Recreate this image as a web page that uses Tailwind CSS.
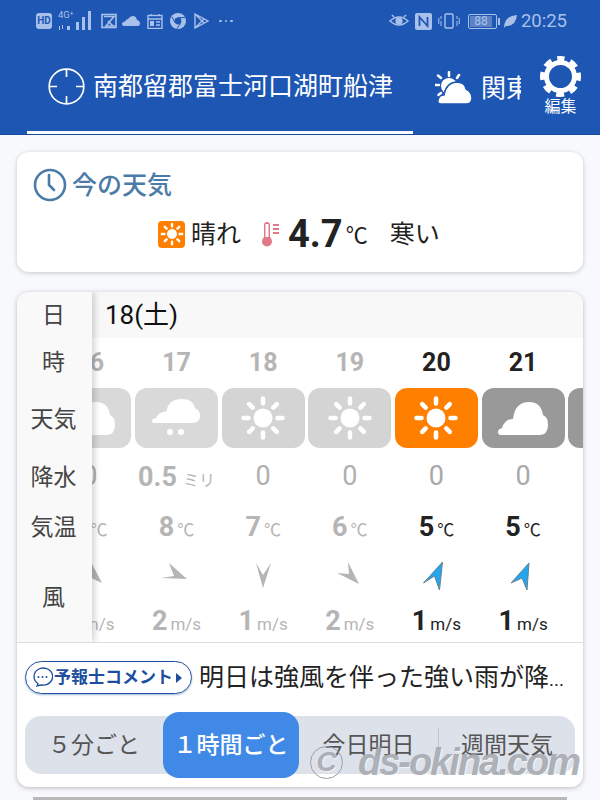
<!DOCTYPE html>
<html lang="ja">
<head>
<meta charset="utf-8">
<script src="https://cdn.jsdelivr.net/npm/@tailwindcss/browser@4"></script>
</head>
<body class="m-0">
<svg class="hidden">
  <symbol id="sun" viewBox="0 0 46 46">
    <circle cx="23" cy="23" r="9.5" fill="#fff"/>
    <g stroke="#fff" stroke-width="4.500" stroke-linecap="round">
      <path d="M23 3.5V8.5M23 37.5V42.5M3.5 23H8.5M37.500 23H42.5M9.2 9.2L12.7 12.7M33.300 33.300L36.800 36.800M36.800 9.2L33.300 12.700M12.700 33.300L9.2 36.800"/>
    </g>
  </symbol>
  <symbol id="cloud" viewBox="0 0 50 33">
    <path fill="#fff" d="M3 33Q0 33 0 30Q0 27 4 26Q7 17 15 17Q17 0 31 0Q43 0 45 13Q50 15 50 23Q50 33 41 33Z"/>
  </symbol>
</svg>
<div class="relative w-[600px] h-[800px] overflow-hidden bg-[#f8f9fc] font-['Roboto','Noto_Sans_CJK_JP',sans-serif]">

  <!-- Header -->
  <header class="h-[135px] bg-[#1e56b4] border-b border-[#184a9c]">
    <div class="h-[42px] flex items-center pl-[36px] pr-[33px] text-[#a9c1ea]">
      <div class="flex items-center h-[16px] w-[16px] justify-center rounded-[3px] bg-[#a9c1ea] text-[#1e56b4] text-[10px] font-bold leading-none">HD</div>
      <svg class="ml-[6px]" width="36" height="22" viewBox="0 0 36 22" fill="currentColor">
        <text x="0" y="8" font-size="9.500" font-family="Roboto">4G⁺</text>
        <path d="M1 16h1v4h-1zM4 15h1v4h-1zM9 16h3v4H9z"/>
        <rect x="18" y="12" width="3" height="8"/><rect x="24" y="7" width="3" height="13"/><rect x="30" y="1" width="3" height="19"/>
      </svg>
      <svg class="ml-[7px]" width="16" height="16" viewBox="0 0 16 16" fill="none" stroke="currentColor" stroke-width="1.600">
        <rect x="1" y="1.500" width="14" height="13"/><path d="M3 3.500H13L5 13H14M7 8L12 13"/>
      </svg>
      <svg class="ml-[5px]" width="18" height="10" viewBox="0 0 18 10" fill="currentColor"><path d="M2 10Q0 10 0 8Q0 6 3 5.500Q4 3 6 3Q8 0 11 0Q14 0 15 4Q18 5 18 7.500Q18 10 15 10Z"/></svg>
      <svg class="ml-[7px]" width="16" height="15" viewBox="0 0 16 15" fill="none" stroke="currentColor" stroke-width="1.400">
        <rect x="1" y="1.500" width="14" height="13"/><path d="M1 5H15M4 0V2M12 0V2M9 8H13M9 11H13"/><rect x="3" y="7" width="4" height="5" fill="currentColor" stroke="none"/>
      </svg>
      <svg class="ml-[7px]" width="16" height="16" viewBox="0 0 16 16"><circle cx="8" cy="8" r="8" fill="currentColor"/><circle cx="8" cy="8" r="3.400" fill="#1e56b4"/><path d="M8 4.600H15M5 9.500L2 4M10.500 10.500L7 15.500" stroke="#1e56b4" stroke-width="1"/></svg>
      <svg class="ml-[8px]" width="15" height="16" viewBox="0 0 15 16" fill="none" stroke="currentColor" stroke-width="1.400"><path d="M1 1L14 8L1 15ZM1 1L10 10M1 15L10 6"/></svg>
      <div class="ml-[10px] flex gap-[3px]"><span class="w-[2.500px] h-[2.500px] rounded-full bg-[#a9c1ea]"></span><span class="w-[2.500px] h-[2.500px] rounded-full bg-[#a9c1ea]"></span><span class="w-[2.500px] h-[2.500px] rounded-full bg-[#a9c1ea]"></span></div>

      <svg class="ml-auto" width="20" height="14" viewBox="0 0 20 14" fill="none" stroke="currentColor" stroke-width="1.600"><path d="M1 7Q10 -1 19 7Q10 15 1 7Z"/><circle cx="10" cy="7" r="2.800" fill="currentColor"/><path d="M3 1L5 3M17 1L15 3"/></svg>
      <svg class="ml-[6px]" width="17" height="17" viewBox="0 0 17 17"><rect width="17" height="17" rx="2" fill="currentColor"/><path d="M4.500 13V4L12.500 13V4" fill="none" stroke="#1e56b4" stroke-width="1.800"/></svg>
      <svg class="ml-[6px]" width="22" height="16" viewBox="0 0 22 16" fill="none" stroke="currentColor" stroke-width="1.400"><rect x="7" y="1" width="8" height="14" rx="1"/><path d="M3 3V6M3 8V13M0.800 5V11M19 3V6M19 8V13M21.200 5V11" stroke-width="1"/></svg>
      <div class="ml-[8px] w-[29px] h-[15px] border border-[#a9c1ea] rounded-[2px] p-px"><div class="h-full w-[85%] bg-[#5c83c6] text-center text-[12px] leading-[11px] text-[#a9c1ea]">88</div></div>
      <span class="ml-px w-[1.500px] h-[7px] bg-[#a9c1ea]"></span>
      <svg class="ml-[4px]" width="13" height="13" viewBox="0 0 13 13" fill="currentColor"><path d="M0 13Q0 1 13 0Q12 11 2 11Z"/></svg>
      <span class="ml-[4px] text-[18.500px] leading-none">20:25</span>
    </div>

    <div class="h-[92px] flex pl-[27px]">
      <div class="w-[386px] flex items-center pl-[21px] border-b-[3px] border-white">
        <svg width="37" height="37" viewBox="0 0 37 37" fill="none" stroke="#fff" stroke-width="1.700"><circle cx="18.500" cy="18.500" r="17.300"/><path d="M18.500 1V9M18.500 28V36M1 18.500H9M28 18.500H36"/></svg>
        <span class="ml-[8px] text-[25px] leading-none text-white whitespace-nowrap">南都留郡富士河口湖町船津</span>
      </div>
      <div class="w-[108px] flex items-center pl-[22px] overflow-hidden">
        <svg class="shrink-0" width="38" height="34" viewBox="0 0 38 34">
          <g stroke="#fff" stroke-width="2.500" stroke-linecap="round"><path d="M14 1V5M3 4.500L6 7M0.500 14H4M3.500 24L6 22M24 4L22 7"/></g>
          <circle cx="14" cy="15" r="8" fill="#fff"/>
          <path fill="#fff" stroke="#1e56b4" stroke-width="1.500" d="M6 33Q2 33 3 29Q4 24 9 24Q11 12 21 11Q30 11 31 18Q37 21 37 27Q37 33 31 33Z"/>
        </svg>
        <span class="ml-[8px] text-[25px] leading-none text-white whitespace-nowrap">関東</span>
      </div>
      <div class="ml-[19px] w-[41px] flex flex-col items-center pt-[14px]">
        <svg class="shrink-0" width="41" height="41" viewBox="0 0 41 41" fill="none" stroke="#fff">
          <circle cx="20.500" cy="20.500" r="14" stroke-width="5"/>
          <circle cx="20.500" cy="20.500" r="18" stroke-width="5" stroke-dasharray="8 6.137" stroke-dashoffset="4" transform="rotate(-90 20.500 20.500)"/>
        </svg>
        <span class="mt-[2px] text-[16px] leading-none text-white whitespace-nowrap">編集</span>
      </div>
    </div>
  </header>

  <!-- Current weather -->
  <section class="mx-[17px] mt-[17px] h-[120px] bg-white rounded-xl shadow-[0_1px_5px_rgba(0,0,0,0.2)]">
    <div class="flex items-center pl-[16px] pt-[16px]">
      <svg width="34" height="34" viewBox="0 0 34 34" fill="none" stroke="#4a7ba7" stroke-width="2.600" stroke-linecap="round"><circle cx="17" cy="17" r="15"/><path d="M16 7V17L21 22"/></svg>
      <span class="ml-[5px] text-[25px] leading-none font-medium text-[#4d7ba8] whitespace-nowrap">今の天気</span>
    </div>
    <div class="mt-[10px] h-[44px] flex items-center pl-[141px] text-[#222]">
      <div class="w-[27px] h-[27px] bg-[#ff8000] rounded-[4px] flex items-center justify-center">
        <svg width="24" height="24"><use href="#sun"/></svg>
      </div>
      <span class="ml-[6px] text-[25px] leading-none whitespace-nowrap">晴れ</span>
      <svg class="ml-[21px]" width="18" height="26" viewBox="0 0 18 26" fill="none"><path d="M2 16V4Q2 1 5 1Q8 1 8 4V16Q10 18 10 20.500A5 5 0 0 1 0 20.500Q0 18 2 16Z" fill="#e17a88"/><rect x="3.500" y="3" width="3" height="13" fill="#fff"/><path d="M11 4H17M11 8H17M11 12H17" stroke="#e17a88" stroke-width="1.800"/></svg>
      <span class="ml-[8px] text-[38px] leading-none font-bold">4.7</span>
      <span class="ml-[3px] text-[22px] leading-none mt-[4px]">℃</span>
      <span class="ml-[22px] text-[25px] leading-none whitespace-nowrap">寒い</span>
    </div>
  </section>

  <!-- Forecast -->
  <section class="relative mx-[17px] mt-[20px] h-[495px] bg-white rounded-xl shadow-[0_1px_5px_rgba(0,0,0,0.25)] overflow-hidden">
    <div class="h-[46px] bg-[#f8f8f8] flex items-center pl-[88px] text-[26px] text-[#111] leading-none">18(土)</div>

    <div class="flex pl-[29.500px] w-[700px] overflow-hidden h-[304px]">
      <!-- 16 -->
      <div class="w-[86.670px] shrink-0 flex flex-col items-center text-[#b5b5b5]">
        <div class="h-[50px] pt-[10px] text-[25px] leading-[30px] font-bold">16</div>
        <div class="w-[83px] h-[60px] rounded-[12px] bg-[#d9d9d9] flex items-center justify-center"><svg width="50" height="33"><use href="#cloud"/></svg></div>
        <div class="h-[56px] pt-px flex items-center text-[27px] text-[#b0b0b0]">0</div>
        <div class="h-[44px] flex items-baseline pt-[3px]"><b class="text-[27px]">8</b><span class="ml-[3px] text-[17px]">℃</span></div>
        <svg class="h-[30px] mt-[13px]" width="30" height="30" viewBox="0 0 30 30"><polygon points="27,22 5,12 17,13 16,1" fill="#b5b5b5"/></svg>
        <div class="h-[44px] flex items-baseline pt-[10px]"><b class="text-[27px]">2</b><span class="ml-[3px] text-[17px]">m/s</span></div>
      </div>
      <!-- 17 -->
      <div class="w-[86.670px] shrink-0 flex flex-col items-center text-[#b5b5b5]">
        <div class="h-[50px] pt-[10px] text-[25px] leading-[30px] font-bold">17</div>
        <div class="w-[83px] h-[60px] rounded-[12px] bg-[#d9d9d9] flex items-center justify-center">
          <svg width="50" height="46" viewBox="0 0 50 46"><g transform="translate(1 4) scale(0.96 0.73)"><use href="#cloud" width="50" height="33"/></g><circle cx="19" cy="37" r="3" fill="#fff"/><circle cx="30" cy="37" r="3" fill="#fff"/></svg>
        </div>
        <div class="h-[56px] flex items-baseline pt-[9px]"><b class="text-[27px]">0.5</b><span class="ml-[6px] text-[16px]">ミリ</span></div>
        <div class="h-[44px] flex items-baseline pt-[3px]"><b class="text-[27px]">8</b><span class="ml-[3px] text-[17px]">℃</span></div>
        <svg class="h-[30px] mt-[13px]" width="30" height="30" viewBox="0 0 30 30"><polygon points="26,18 0,17 13,15 8,2" fill="#b5b5b5"/></svg>
        <div class="h-[44px] flex items-baseline pt-[10px]"><b class="text-[27px]">2</b><span class="ml-[3px] text-[17px]">m/s</span></div>
      </div>
      <!-- 18 -->
      <div class="w-[86.670px] shrink-0 flex flex-col items-center text-[#b5b5b5]">
        <div class="h-[50px] pt-[10px] text-[25px] leading-[30px] font-bold">18</div>
        <div class="w-[83px] h-[60px] rounded-[12px] bg-[#d4d4d4] flex items-center justify-center"><svg width="46" height="46"><use href="#sun"/></svg></div>
        <div class="h-[56px] pt-px flex items-center text-[27px] text-[#b0b0b0]">0</div>
        <div class="h-[44px] flex items-baseline pt-[3px]"><b class="text-[27px]">7</b><span class="ml-[3px] text-[17px]">℃</span></div>
        <svg class="h-[30px] mt-[13px]" width="30" height="30" viewBox="0 0 30 30"><polygon points="15,27 8,2 15,14 23,2" fill="#b5b5b5"/></svg>
        <div class="h-[44px] flex items-baseline pt-[10px]"><b class="text-[27px]">1</b><span class="ml-[3px] text-[17px]">m/s</span></div>
      </div>
      <!-- 19 -->
      <div class="w-[86.670px] shrink-0 flex flex-col items-center text-[#b5b5b5]">
        <div class="h-[50px] pt-[10px] text-[25px] leading-[30px] font-bold">19</div>
        <div class="w-[83px] h-[60px] rounded-[12px] bg-[#d4d4d4] flex items-center justify-center"><svg width="46" height="46"><use href="#sun"/></svg></div>
        <div class="h-[56px] pt-px flex items-center text-[27px] text-[#b0b0b0]">0</div>
        <div class="h-[44px] flex items-baseline pt-[3px]"><b class="text-[27px]">6</b><span class="ml-[3px] text-[17px]">℃</span></div>
        <svg class="h-[30px] mt-[13px]" width="30" height="30" viewBox="0 0 30 30"><polygon points="24,23 2,12 14,13 13,1" fill="#b5b5b5"/></svg>
        <div class="h-[44px] flex items-baseline pt-[10px]"><b class="text-[27px]">2</b><span class="ml-[3px] text-[17px]">m/s</span></div>
      </div>
      <!-- 20 -->
      <div class="w-[86.670px] shrink-0 flex flex-col items-center text-[#222]">
        <div class="h-[50px] pt-[10px] text-[25px] leading-[30px] font-bold">20</div>
        <div class="w-[83px] h-[60px] rounded-[12px] bg-[#ff8000] flex items-center justify-center"><svg width="46" height="46"><use href="#sun"/></svg></div>
        <div class="h-[56px] pt-px flex items-center text-[27px] text-[#a9a9a9]">0</div>
        <div class="h-[44px] flex items-baseline pt-[3px]"><b class="text-[27px]">5</b><span class="ml-[3px] text-[17px]">℃</span></div>
        <svg class="h-[30px] mt-[13px]" width="30" height="30" viewBox="0 0 30 30"><polygon points="21.500,1 2.500,22 13.500,15 18.500,29" fill="#22a7ee" stroke="#6b7f8c"/></svg>
        <div class="h-[44px] flex items-baseline pt-[10px]"><b class="text-[27px]">1</b><span class="ml-[3px] text-[17px]">m/s</span></div>
      </div>
      <!-- 21 -->
      <div class="w-[86.670px] shrink-0 flex flex-col items-center text-[#222]">
        <div class="h-[50px] pt-[10px] text-[25px] leading-[30px] font-bold">21</div>
        <div class="w-[83px] h-[60px] rounded-[12px] bg-[#999] flex items-center justify-center"><svg width="50" height="33"><use href="#cloud"/></svg></div>
        <div class="h-[56px] pt-px flex items-center text-[27px] text-[#a9a9a9]">0</div>
        <div class="h-[44px] flex items-baseline pt-[3px]"><b class="text-[27px]">5</b><span class="ml-[3px] text-[17px]">℃</span></div>
        <svg class="h-[30px] mt-[13px]" width="30" height="30" viewBox="0 0 30 30"><polygon points="21,2 3,22 14,17 19,29" fill="#22a7ee" stroke="#6b7f8c"/></svg>
        <div class="h-[44px] flex items-baseline pt-[10px]"><b class="text-[27px]">1</b><span class="ml-[3px] text-[17px]">m/s</span></div>
      </div>
      <!-- 22 -->
      <div class="w-[86.670px] shrink-0 flex flex-col items-center pt-[50px]">
        <div class="w-[83px] h-[60px] rounded-[12px] bg-[#999]"></div>
      </div>
    </div>

    <!-- Sticky labels -->
    <div class="absolute left-0 top-0 w-[75px] h-[350px] bg-[#f9f9f9] shadow-[3px_0_6px_rgba(0,0,0,0.16)] flex flex-col items-center pr-[2px] text-[23px] text-[#444] leading-none">
      <div class="h-[46px] flex items-center">日</div>
      <div class="h-[48px] flex items-center">時</div>
      <div class="h-[66px] flex items-center">天気</div>
      <div class="h-[50px] flex items-center">降水</div>
      <div class="h-[51px] flex items-center">気温</div>
      <div class="h-[88px] flex items-center">風</div>
    </div>

    <!-- Comment -->
    <div class="relative z-10 h-[70px] bg-white border-t border-[#ddd] flex items-center pl-[8px]">
      <div class="w-[167px] h-[33px] shrink-0 rounded-full border-[1.500px] border-[#1e4f9e] shadow-[0_1px_2px_rgba(30,79,158,0.4)] flex items-center pl-[6px] text-[#1e4f9e]">
        <svg class="shrink-0" width="21" height="21" viewBox="0 0 21 21" fill="none" stroke="#1e4f9e" stroke-width="1.300"><path d="M5 19L6 16.500A9.300 8.500 0 1 1 10.500 18Q7.500 18 5 19Z"/><circle cx="6.500" cy="10" r="1" fill="#1e4f9e" stroke="none"/><circle cx="10.500" cy="10" r="1" fill="#1e4f9e" stroke="none"/><circle cx="14.500" cy="10" r="1" fill="#1e4f9e" stroke="none"/></svg>
        <span class="ml-px text-[17px] leading-none font-bold whitespace-nowrap">予報士コメント</span>
        <svg class="ml-[3px]" width="6" height="10" viewBox="0 0 6 10" fill="#1e4f9e"><path d="M0 0L6 5L0 10Z"/></svg>
      </div>
      <span class="ml-[7px] text-[25px] leading-none text-[#222] whitespace-nowrap">明日は強風を伴った強い雨が降<span class="text-[19px]">...</span></span>
    </div>

    <!-- Toggle -->
    <div class="mx-[8px] h-[58px] flex items-center bg-[#dde1e9] rounded-[16px] text-[23px] text-[#555] leading-none mt-[4px]">
      <div class="w-[138px] text-center whitespace-nowrap">５分ごと</div>
      <div class="w-[136px] h-[66px] bg-[#4189e6] rounded-[16px] text-white font-medium flex items-center justify-center whitespace-nowrap">１時間ごと</div>
      <div class="w-[139px] text-center whitespace-nowrap">今日明日</div>
      <div class="w-[137px] h-[34px] border-l border-[#c0c5ce] flex items-center justify-center whitespace-nowrap">週間天気</div>
    </div>
  </section>

  <div class="mx-[33px] mt-[10px] h-[3px] bg-[#b9b9b9]"></div>

  <!-- Watermark -->
  <div class="absolute left-[310px] top-[743px] flex items-center text-[#9a9ea6]/80 italic font-bold font-['Liberation_Sans',sans-serif] whitespace-nowrap leading-none [text-shadow:1px_1px_1px_rgba(255,255,255,0.7)]">
    <span class="w-[33px] h-[33px] rounded-full border border-[#9a9ea6] flex items-center justify-center text-[28px]">C</span>
    <span class="ml-[15px] text-[38px] -tracking-[2px]">ds-okina.com</span>
  </div>
</div>
</body>
</html>
